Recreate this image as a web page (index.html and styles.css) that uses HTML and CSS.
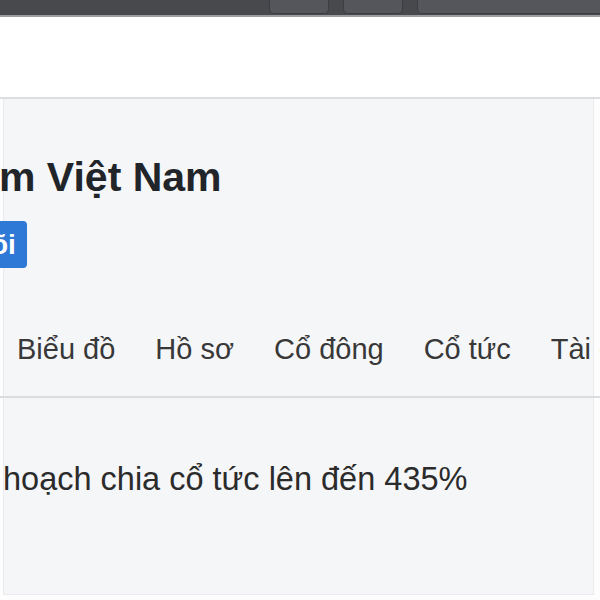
FILE: index.html
```html
<!DOCTYPE html>
<html>
<head>
  <title>Cổ phiếu - Việt Nam</title>
  <link rel="stylesheet" href="styles.css">
</head>
<body>
  <div class="chrome">
    <span class="chrome-btn"></span>
    <span class="chrome-btn"></span>
    <span class="chrome-btn wide"></span>
  </div>
  <div class="topbar"></div>

  <div class="card">
    <h1 class="title">m Việt Nam</h1>
    <button class="follow">õi</button>

    <nav class="tabs">
      <a href="#">Biểu đồ</a>
      <a href="#">Hồ sơ</a>
      <a href="#">Cổ đông</a>
      <a href="#">Cổ tức</a>
      <a href="#">Tài chính</a>
    </nav>

    <p class="news">hoạch chia cổ tức lên đến 435%</p>
  </div>
</body>
</html>
```

FILE: styles.css
```css
html, body {
  margin: 0;
  width: 600px;
  height: 600px;
  overflow: hidden;
  background: #fdfdfe;
  font-family: "Liberation Sans", Arial, sans-serif;
}
.chrome {
  display: flex;
  gap: 14px;
  height: 15px;
  padding-left: 269px;
  background: #48494d;
  border-bottom: 2px solid #9c9da1;
}
.chrome-btn {
  display: block;
  flex: none;
  width: 58px;
  height: 13px;
  background: #55565b;
  border: 1px solid #3d3e42;
  border-top: none;
  border-radius: 0 0 5px 5px;
}
.chrome-btn.wide {
  width: 200px;
}
.topbar {
  height: 80px;
  background: #ffffff;
  border-bottom: 2px solid #dcdee1;
}
.card {
  box-sizing: border-box;
  height: 496px;
  margin: 0 6px 0 3px;
  padding-top: 55px;
  background: #f5f6f8;
  border: 1px solid #e9ebee;
  border-top: none;
}
.title {
  margin: 0 0 21px -5px;
  font-size: 41px;
  font-weight: bold;
  line-height: 46px;
  color: #212529;
}
.follow {
  display: block;
  height: 47px;
  margin: 0 0 0 -13px;
  padding: 0 11px 0 0;
  background: #2e79d6;
  color: #ffffff;
  border: none;
  border-radius: 0 4px 4px 0;
  font-family: inherit;
  font-size: 28px;
  font-weight: bold;
}
.tabs {
  display: flex;
  gap: 40px;
  margin: 65px -8px 0 -4px;
  padding: 0 0 30px 17px;
  border-bottom: 2px solid #dadcdf;
  white-space: nowrap;
}
.tabs a {
  font-size: 29px;
  line-height: 33px;
  color: #383838;
  text-decoration: none;
}
.news {
  margin: 62px 0 0 -1px;
  font-size: 32.5px;
  line-height: 38px;
  color: #2b2b2b;
}
```
